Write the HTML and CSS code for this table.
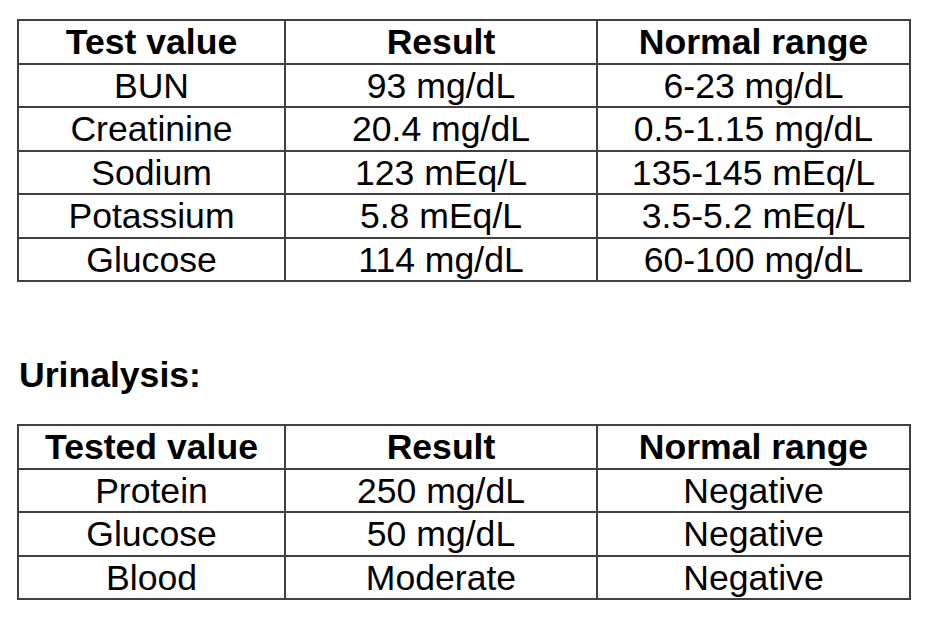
FILE: index.html
```html
<!DOCTYPE html>
<html>
<head>
<meta charset="utf-8">
<link rel="stylesheet" href="styles.css">
</head>
<body>
<div class="page">
  <table class="lab">
    <colgroup><col class="c1"><col class="c2"><col class="c3"></colgroup>
    <thead>
      <tr><th>Test value</th><th>Result</th><th>Normal range</th></tr>
    </thead>
    <tbody>
      <tr><td>BUN</td><td>93 mg/dL</td><td>6-23 mg/dL</td></tr>
      <tr><td>Creatinine</td><td>20.4 mg/dL</td><td>0.5-1.15 mg/dL</td></tr>
      <tr><td>Sodium</td><td>123 mEq/L</td><td>135-145 mEq/L</td></tr>
      <tr><td>Potassium</td><td>5.8 mEq/L</td><td>3.5-5.2 mEq/L</td></tr>
      <tr><td>Glucose</td><td>114 mg/dL</td><td>60-100 mg/dL</td></tr>
    </tbody>
  </table>

  <h2 class="section-title">Urinalysis:</h2>

  <table class="lab">
    <colgroup><col class="c1"><col class="c2"><col class="c3"></colgroup>
    <thead>
      <tr><th>Tested value</th><th>Result</th><th>Normal range</th></tr>
    </thead>
    <tbody>
      <tr><td>Protein</td><td>250 mg/dL</td><td>Negative</td></tr>
      <tr><td>Glucose</td><td>50 mg/dL</td><td>Negative</td></tr>
      <tr><td>Blood</td><td>Moderate</td><td>Negative</td></tr>
    </tbody>
  </table>
</div>
</body>
</html>
```
FILE: styles.css
```css
html, body {
  margin: 0;
  padding: 0;
  background: #ffffff;
}

body {
  font-family: "Liberation Sans", Arial, sans-serif;
  color: #000;
}

.page {
  padding: 19px 0 0 17px;
}

.lab {
  border-collapse: collapse;
  table-layout: fixed;
  width: 892px;
}

.lab .c1 { width: 267px; }
.lab .c2 { width: 312px; }
.lab .c3 { width: 313px; }

.lab th,
.lab td {
  border: 2px solid #404040;
  padding: 1px 0 0 0;
  font-size: 35.6px;
  line-height: 40.5px;
  text-align: center;
  white-space: nowrap;
}

.lab th {
  font-weight: bold;
}

.lab td {
  font-weight: normal;
}

.section-title {
  margin: 73px 0 29px 2px;
  font-size: 35.6px;
  line-height: 40px;
  font-weight: bold;
}
```
